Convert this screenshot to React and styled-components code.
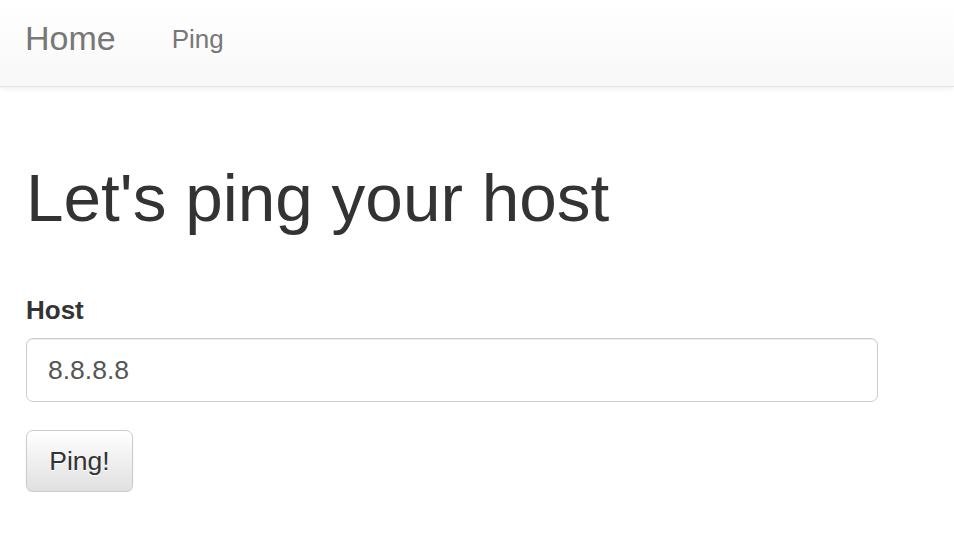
import React, { useState } from "react";
import styled, { createGlobalStyle } from "styled-components";

const GlobalStyle = createGlobalStyle`
    html, body {
        margin: 0;
        padding: 0;
        background: #fff;
        font-family: "Liberation Sans", Arial, Helvetica, sans-serif;
        color: #333;
    }
`;

const Navbar = styled.nav`
    display: flex;
    align-items: flex-start;
    height: 86px;
    padding-left: 25px;
    background-image: linear-gradient(to bottom, #fff 0, #f8f8f8 100%);
    border-bottom: 1px solid #e3e3e3;
    box-shadow: inset 0 1px 0 rgba(255, 255, 255, .15), 0 1px 6px rgba(0, 0, 0, .08);
`;

const Brand = styled.a`
    padding-top: 20px;
    font-size: 34px;
    line-height: 36px;
    color: #777;
    text-decoration: none;
    text-shadow: 0 1px 0 rgba(255, 255, 255, .25);
`;

const NavLink = styled.a`
    margin-left: 56px;
    padding-top: 21px;
    font-size: 26px;
    line-height: 36px;
    color: #777;
    text-decoration: none;
`;

const Container = styled.main`
    padding: 74px 26px 0 26px;
`;

const Title = styled.h1`
    margin: 0;
    font-size: 67.5px;
    font-weight: 500;
    line-height: 1.1;
    color: #333;
`;

const Form = styled.form`
    width: 852px;
    margin-top: 57px;
`;

const FormGroup = styled.div`
    display: flex;
    flex-direction: column;
    margin-bottom: 28px;
`;

const Label = styled.label`
    font-size: 26px;
    font-weight: bold;
    line-height: 36px;
    margin-bottom: 10px;
    color: #333;
`;

const Input = styled.input`
    box-sizing: border-box;
    height: 64px;
    width: 100%;
    padding: 0 21px;
    font-family: inherit;
    font-size: 26.5px;
    color: #555;
    background: #fff;
    border: 1px solid #ccc;
    border-radius: 7px;
    box-shadow: inset 0 1px 1px rgba(0, 0, 0, .075);

    &:focus {
        outline: none;
    }
`;

const Button = styled.button`
    box-sizing: border-box;
    height: 62px;
    width: 107px;
    font-family: inherit;
    font-size: 26.5px;
    color: #333;
    background-image: linear-gradient(to bottom, #fff 0, #e0e0e0 100%);
    border: 1px solid #ccc;
    border-radius: 7px;
    text-shadow: 0 1px 0 #fff;
    box-shadow: inset 0 1px 0 rgba(255, 255, 255, .15), 0 1px 2px rgba(0, 0, 0, .075);
    cursor: pointer;
`;

const App = () => {
    const [host, setHost] = useState("8.8.8.8");

    return (
        <>
            <GlobalStyle />
            <Navbar>
                <Brand href="#">Home</Brand>
                <NavLink href="#">Ping</NavLink>
            </Navbar>
            <Container>
                <Title>Let's ping your host</Title>
                <Form onSubmit={(e) => e.preventDefault()}>
                    <FormGroup>
                        <Label htmlFor="host">Host</Label>
                        <Input id="host" type="text" value={host} onChange={(e) => setHost(e.target.value)} />
                    </FormGroup>
                    <Button type="submit">Ping!</Button>
                </Form>
            </Container>
        </>
    );
}

export default App;
